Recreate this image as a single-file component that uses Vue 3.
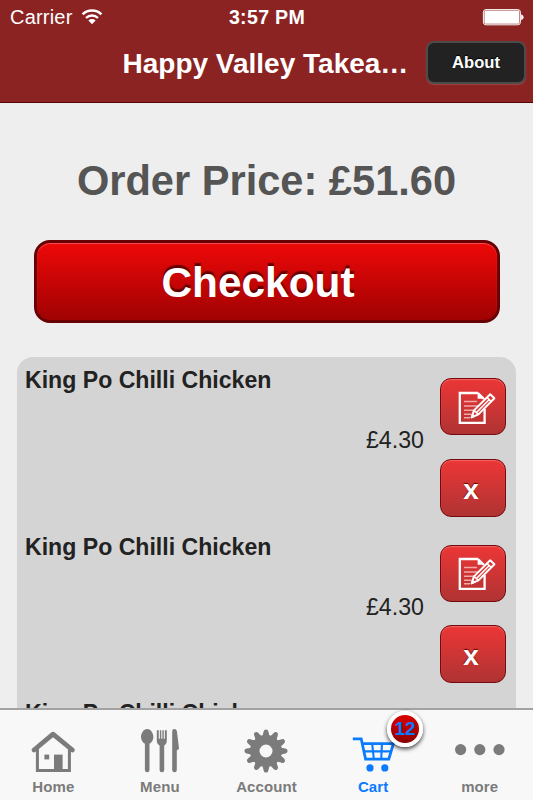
<script setup>
import { ref } from 'vue'

const items = ref([
  { id: 1, name: 'King Po Chilli Chicken', price: '£4.30' },
  { id: 2, name: 'King Po Chilli Chicken', price: '£4.30' },
  { id: 3, name: 'King Po Chilli Chicken', price: '£4.30' }
])

const tabs = [
  { id: 'home', label: 'Home' },
  { id: 'menu', label: 'Menu' },
  { id: 'account', label: 'Account' },
  { id: 'cart', label: 'Cart', badge: 12 },
  { id: 'more', label: 'more' }
]

const activeTab = ref('cart')

// the twelve teeth of the gear
const teeth = Array.from({ length: 12 }, (_, i) => i * 30)

function removeItem(id) {
  items.value = items.value.filter((item) => item.id !== id)
}
</script>

<template>
  <div class="app">
    <header class="header">
      <div class="status">
        <div class="status__left">
          <span>Carrier</span>
          <svg class="wifi" width="22" height="16" viewBox="0 0 22 16">
            <path d="M1.6 5.4A13.4 13.4 0 0 1 20.4 5.4" fill="none" stroke="#fff" stroke-width="2.5" />
            <path d="M5 9A8.6 8.6 0 0 1 17 9" fill="none" stroke="#fff" stroke-width="2.4" />
            <path d="M7.4 11.4A5.2 5.2 0 0 1 14.6 11.4L11 15.2Z" fill="#fff" />
          </svg>
        </div>
        <span class="status__time">3:57 PM</span>
        <div class="status__right">
          <svg width="42" height="17" viewBox="0 0 42 17">
            <rect x="1.4" y="0.6" width="37" height="15.2" rx="2.6" fill="none" stroke="#fff" stroke-width="1" />
            <rect x="2.4" y="1.6" width="35" height="13.2" rx="1.4" fill="#fff" />
            <path d="M39.2 5.2Q41.6 6 41.6 8.2Q41.6 10.4 39.2 11.2Z" fill="#fff" />
          </svg>
        </div>
      </div>
      <div class="titlebar">
        <h1 class="title">Happy Valley Takea…</h1>
        <button type="button" class="about">About</button>
      </div>
    </header>

    <main class="content">
      <h2 class="total">Order Price: £51.60</h2>
      <button type="button" class="checkout">Checkout</button>

      <ul class="list">
        <li v-for="item in items" :key="item.id" class="item">
          <p class="item__name">{{ item.name }}</p>
          <p class="item__price">{{ item.price }}</p>
          <div class="item__actions">
            <button type="button" class="action" aria-label="Edit">
              <svg width="40" height="36" viewBox="0 0 40 36">
                <path d="M21 2H2.8V31.8H27.6V18M21 2L27 8" fill="none" stroke="#fff" stroke-width="2.3" />
                <path d="M20.6 1.4V7.8H27.8Z" fill="#fff" />
                <path d="M7 10.5H20M7 14.9H21M7 19.3H17M7 23.2H14.5M7 26.8H13" stroke="#f4a9a9" stroke-width="1.5" />
                <path d="M14.6 26.4L17 19.4L33.2 3.2L37.4 7.2L21.4 23.4Z" fill="#dc3434" stroke="#fff" stroke-width="2" stroke-linejoin="round" />
                <path d="M17.4 19.6L21.2 23.2M30 6.4L34 10.4M19.6 21.4L32 8.8" stroke="#fff" stroke-width="1.5" />
                <path d="M14 27.2L15.4 22.4L18.6 25.4Z" fill="#fff" />
              </svg>
            </button>
            <button type="button" class="action action--remove" @click="removeItem(item.id)">x</button>
          </div>
        </li>
      </ul>
    </main>

    <nav class="tabbar">
      <a
        v-for="tab in tabs"
        :key="tab.id"
        class="tab"
        :class="{ 'is-active': tab.id === activeTab }"
        @click="activeTab = tab.id"
      >
        <span class="tab__icon">
          <svg v-if="tab.id === 'home'" width="46" height="46" viewBox="0 0 46 46">
            <path d="M4 22L23 6.2L42.4 22" fill="none" stroke="currentColor" stroke-width="4.8" stroke-linecap="round" stroke-linejoin="round" />
            <path d="M7.4 20V42.4H39.4V20" fill="none" stroke="currentColor" stroke-width="3" />
            <rect x="14.4" y="26.6" width="4.8" height="4.8" fill="currentColor" />
            <rect x="24" y="26.6" width="8.6" height="16" fill="currentColor" />
          </svg>
          <svg v-else-if="tab.id === 'menu'" width="46" height="46" viewBox="0 0 46 46" fill="currentColor">
            <path d="M10.2 1C14 1 16.4 5.4 16.4 9C16.4 12.2 14.4 14.8 12.5 15.7V42A2.3 2.3 0 0 1 7.9 42V15.7C6 14.8 4 12.2 4 9C4 5.4 6.4 1 10.2 1Z" />
            <path d="M19.8 2.2H29.8V12.6C29.8 15.4 28.6 17 27.2 17.6V42A2.3 2.3 0 0 1 22.6 42V17.6C21.2 17 19.8 15.4 19.8 12.6Z" />
            <path d="M22.3 1.6V10.8M24.8 1.6V10.8M27.3 1.6V10.8" stroke="#f8f8f8" stroke-width="1.1" />
            <path d="M35.2 3.2Q35.2 1 37.4 1C39.2 1 39.8 2.4 40 4L42 20.6Q41.8 22 39.8 22.2V42A2.3 2.3 0 0 1 35.2 42Z" />
          </svg>
          <svg v-else-if="tab.id === 'account'" width="46" height="46" viewBox="0 0 46 46">
            <circle cx="23" cy="23" r="11.2" fill="none" stroke="currentColor" stroke-width="9.4" />
            <path
              v-for="angle in teeth"
              :key="angle"
              :transform="`rotate(${angle} 23 23)`"
              d="M18.4 9.2Q20.2 7.4 20.6 3.6Q21 1.4 23 1.4Q25 1.4 25.4 3.6Q25.8 7.4 27.6 9.2Z"
              fill="currentColor"
            />
          </svg>
          <svg v-else-if="tab.id === 'cart'" width="46" height="46" viewBox="0 0 46 46" fill="none" stroke="currentColor">
            <path d="M2.8 10.8H11.2L15.6 31.2H38.8L43.4 15.6H13" stroke-width="2.8" />
            <path d="M14.2 23.4H41M22.2 15.6L23.8 31M32 15.6L31.2 31" stroke-width="2.1" />
            <circle cx="20" cy="39.9" r="3.6" fill="currentColor" stroke="none" />
            <circle cx="34.8" cy="39.9" r="3.6" fill="currentColor" stroke="none" />
          </svg>
          <svg v-else width="52" height="46" viewBox="0 0 52 46" fill="currentColor">
            <circle cx="6.6" cy="21.6" r="5.6" />
            <circle cx="25.8" cy="21.6" r="5.6" />
            <circle cx="45" cy="21.6" r="5.6" />
          </svg>
          <span v-if="tab.badge" class="badge">{{ tab.badge }}</span>
        </span>
        <span class="tab__label">{{ tab.label }}</span>
      </a>
    </nav>
  </div>
</template>

<style>
body {
  margin: 0;
}
</style>

<style scoped>
* {
  box-sizing: border-box;
}

button {
  padding: 0;
  font: inherit;
  cursor: pointer;
}

.app {
  height: 800px;
  display: flex;
  flex-direction: column;
  overflow: hidden;
  background: #eee;
  color: #222;
  font-family: 'Liberation Sans', Arial, Helvetica, sans-serif;
}

.header {
  flex: 0 0 103px;
  background: #8b2323;
  border-bottom: 1px solid #590404;
  color: #fff;
}

.status {
  height: 35px;
  display: grid;
  grid-template-columns: 1fr auto 1fr;
  align-items: center;
  padding: 0 9px 0 10px;
  font-size: 20px;
}

.status__left {
  display: flex;
  align-items: center;
  gap: 8px;
  letter-spacing: 0.2px;
}

.wifi {
  margin-top: -2px;
}

.status__time {
  font-weight: 700;
  font-size: 19.6px;
  letter-spacing: 0.3px;
}

.status__right {
  display: flex;
  justify-content: flex-end;
}

.titlebar {
  display: grid;
  grid-template-columns: 122.5px 1fr 100px;
  align-items: center;
  padding-right: 7px;
}

.title {
  grid-column: 2;
  margin: 0;
  padding-top: 4px;
  font-size: 28px;
  line-height: 50px;
  white-space: nowrap;
}

.about {
  height: 43px;
  padding-top: 2px;
  border: 2px solid #4d4a4a;
  border-radius: 8px;
  background: #222;
  color: #fff;
  font-size: 16.6px;
  font-weight: 700;
  text-shadow: 0 -1px 1px #000;
  box-shadow: 0 1px 1px rgba(255, 255, 255, 0.15);
}

.content {
  flex: 1;
  min-height: 0;
  overflow: hidden;
  padding: 0 17px;
}

.total {
  margin: 54px 0 0;
  color: #555;
  font-size: 41.6px;
  line-height: 48px;
  text-align: center;
  white-space: nowrap;
}

.checkout {
  display: block;
  width: 466px;
  height: 83px;
  margin: 35px 0 0 17px;
  padding: 2px 18px 0 0;
  border: 3px solid #680004;
  border-radius: 16px;
  background: linear-gradient(180deg, #ee0808 0%, #a00203 100%);
  box-shadow: inset 0 1px 1px rgba(255, 255, 255, 0.3);
  color: #fff;
  font-size: 42.4px;
  font-weight: 700;
  text-shadow: 0 -3px 1px #650000;
}

.list {
  margin: 34px 0 0;
  padding: 0;
  list-style: none;
  border-radius: 16px;
  background: #d4d4d4;
}

.item {
  height: 166.5px;
  display: grid;
  grid-template-columns: 1fr 66px;
  grid-template-rows: 48px 1fr;
  column-gap: 16px;
  padding: 0 10px 0 8px;
}

.item__name {
  margin: 0;
  padding-top: 10px;
  font-size: 23.1px;
  font-weight: 700;
  line-height: 26px;
}

.item__price {
  grid-row: 2;
  margin: 0;
  padding-top: 21px;
  font-size: 23.2px;
  line-height: 28px;
  text-align: right;
}

.item__actions {
  grid-column: 2;
  grid-row: 1 / 3;
  display: flex;
  flex-direction: column;
  gap: 23.5px;
  padding-top: 21px;
}

.action {
  height: 57px;
  display: flex;
  align-items: center;
  justify-content: center;
  border: 1.5px solid #75090c;
  border-radius: 11px;
  background: linear-gradient(180deg, #ec3636 0%, #b03333 100%);
  box-shadow: inset 0 1px 1px rgba(255, 255, 255, 0.25);
  color: #fff;
}

.action svg {
  margin: 4px 0 0 7px;
}

.action--remove {
  height: 58px;
  padding: 4px 4px 0 0;
  font-size: 28px;
  font-weight: 700;
  text-shadow: 0 -1px 1px #650000;
}

.tabbar {
  flex: 0 0 92px;
  display: grid;
  grid-template-columns: repeat(5, 1fr);
  border-top: 2px solid #a2a2a2;
  background: #f8f8f8;
}

.tab {
  display: flex;
  flex-direction: column;
  align-items: center;
  padding-top: 18px;
  color: #7b7b7b;
  cursor: pointer;
}

.tab.is-active {
  color: #0a7aff;
}

.tab__icon {
  position: relative;
  height: 46px;
}

.tab__icon svg {
  display: block;
}

.tab__label {
  margin-top: 4px;
  font-size: 15px;
  font-weight: 700;
  line-height: 17px;
  letter-spacing: 0.1px;
}

.badge {
  position: absolute;
  top: -17px;
  right: -27px;
  width: 36px;
  height: 36px;
  border: 4px solid #fff;
  border-radius: 50%;
  background: linear-gradient(180deg, #e60000, #800000) border-box;
  box-shadow: 0 2px 4px rgba(0, 0, 0, 0.75);
  font-size: 19px;
  font-weight: 700;
  line-height: 28px;
  text-align: center;
}
</style>
